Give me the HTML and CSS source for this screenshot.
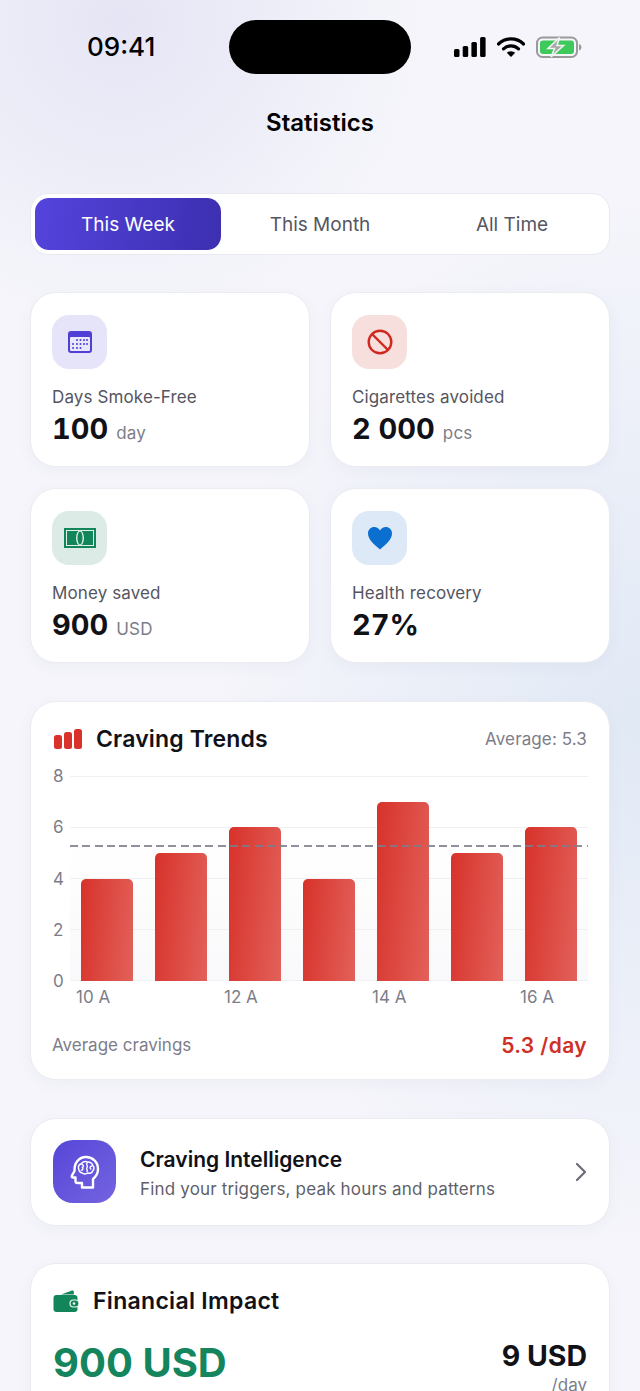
FILE: index.html
```html
<!DOCTYPE html>
<html lang="en">
<head>
    <meta charset="UTF-8">
    <meta name="viewport" content="width=device-width, initial-scale=1.0">
    <title>Statistics</title>
    <link rel="stylesheet" href="styles.css">
</head>
<body>
    <div class="status-bar">
        <span class="time">09:41</span>
        <div class="island"></div>
        <div class="status-icons">
            <svg class="signal" width="32" height="20" viewBox="0 0 32 20">
                <rect x="0" y="12" width="5.500" height="8" rx="1.500"/>
                <rect x="8.700" y="9" width="5.500" height="11" rx="1.500"/>
                <rect x="17.400" y="5" width="5.500" height="15" rx="1.500"/>
                <rect x="26.100" y="0" width="5.500" height="20" rx="1.500"/>
            </svg>
            <svg class="wifi" width="28" height="20" viewBox="0 0 28 20">
                <path d="M1.500 7a18 18 0 0 1 25 0" fill="none" stroke="#000" stroke-width="3.200" stroke-linecap="round"/>
                <path d="M6.500 11.800a11 11 0 0 1 15 0" fill="none" stroke="#000" stroke-width="3.200" stroke-linecap="round"/>
                <path d="M9.800 15.800a6.200 6.200 0 0 1 8.400 0L14 20z"/>
            </svg>
            <svg class="battery" width="46" height="22" viewBox="0 0 46 22">
                <rect x="1" y="1.500" width="40" height="19.500" rx="5.500" fill="none" stroke="#9a9a9a" stroke-width="2"/>
                <rect x="4" y="4.500" width="34" height="13.500" rx="3" fill="#3ec95c"/>
                <path d="M43 8c1.600.400 2.400 1.600 2.400 3.200s-.800 2.800-2.400 3.200z" fill="#9a9a9a"/>
                <path d="M23.500 1.500 12 12.500h6.500L15 21l12.500-11.500H21z" fill="#a8a8a8" stroke="#eef4ef" stroke-width="1.600"/>
            </svg>
        </div>
    </div>

    <h1 class="page-title">Statistics</h1>

    <main class="content">
        <div class="tabs">
            <div class="tab tab-active">This Week</div>
            <div class="tab">This Month</div>
            <div class="tab">All Time</div>
        </div>

        <div class="stat-grid">
            <div class="card stat-card">
                <div class="stat-icon icon-purple">
                    <svg width="26" height="24" viewBox="0 0 26 24">
                        <rect x="1" y="1" width="24" height="22" rx="3" fill="#4f3fd6"/>
                        <rect x="3" y="7" width="20" height="14" rx="1" fill="#e9e7fb"/>
                        <g fill="#4f3fd6">
                            <circle cx="10" cy="10" r="1"/><circle cx="13.500" cy="10" r="1"/><circle cx="17" cy="10" r="1"/><circle cx="20" cy="10" r="1"/>
                            <circle cx="6" cy="14" r="1"/><circle cx="10" cy="14" r="1"/><circle cx="13.500" cy="14" r="1"/><circle cx="17" cy="14" r="1"/><circle cx="20" cy="14" r="1"/>
                            <circle cx="6" cy="18" r="1"/><circle cx="10" cy="18" r="1"/><circle cx="13.500" cy="18" r="1"/>
                        </g>
                    </svg>
                </div>
                <div class="stat-label">Days Smoke-Free</div>
                <div class="stat-value">100 <span class="stat-unit">day</span></div>
            </div>
            <div class="card stat-card">
                <div class="stat-icon icon-red">
                    <svg width="26" height="26" viewBox="0 0 26 26" fill="none" stroke="#d0281e" stroke-width="2.400">
                        <circle cx="13" cy="13" r="11.300"/>
                        <path d="M5 5l16 16"/>
                    </svg>
                </div>
                <div class="stat-label">Cigarettes avoided</div>
                <div class="stat-value">2 000 <span class="stat-unit">pcs</span></div>
            </div>
            <div class="card stat-card">
                <div class="stat-icon icon-green">
                    <svg width="32" height="20" viewBox="0 0 32 20">
                        <rect width="32" height="20" fill="#12855a"/>
                        <rect x="2.500" y="2.500" width="27" height="15" fill="none" stroke="#e3f0ea" stroke-width="1"/>
                        <ellipse cx="16" cy="10" rx="4" ry="7.500" fill="#dcebe4"/>
                        <ellipse cx="16" cy="10" rx="2.500" ry="6.500" fill="#12855a"/>
                    </svg>
                </div>
                <div class="stat-label">Money saved</div>
                <div class="stat-value">900 <span class="stat-unit">USD</span></div>
            </div>
            <div class="card stat-card">
                <div class="stat-icon icon-blue">
                    <svg width="26" height="24" viewBox="0 0 26 24">
                        <path d="M13 23.500C8 19 1 14 1 7.500 1 3.500 4 1 7.200 1 9.700 1 11.900 2.300 13 4.500 14.100 2.300 16.300 1 18.800 1 22 1 25 3.500 25 7.500 25 14 18 19 13 23.500z" fill="#0b6fd0"/>
                    </svg>
                </div>
                <div class="stat-label">Health recovery</div>
                <div class="stat-value">27%</div>
            </div>
        </div>

        <section class="card chart-card">
            <div class="chart-header">
                <div class="chart-title">
                    <svg width="28" height="20" viewBox="0 0 28 20" fill="#d9322a">
                        <rect x="0" y="6" width="8" height="14" rx="2.500"/>
                        <rect x="10" y="3" width="8" height="17" rx="2.500"/>
                        <rect x="20" y="0" width="8" height="20" rx="2.500"/>
                    </svg>
                    <span>Craving Trends</span>
                </div>
                <span class="chart-average">Average: 5.3</span>
            </div>

            <div class="chart-body">
                <div class="y-axis">
                    <span>8</span><span>6</span><span>4</span><span>2</span><span>0</span>
                </div>
                <div class="plot">
                    <div class="grid-lines">
                        <i></i><i></i><i></i><i></i><i></i>
                    </div>
                    <div class="bars">
                        <div class="bar" style="height: 102px"></div>
                        <div class="bar" style="height: 128px"></div>
                        <div class="bar" style="height: 154px"></div>
                        <div class="bar" style="height: 102px"></div>
                        <div class="bar" style="height: 179px"></div>
                        <div class="bar" style="height: 128px"></div>
                        <div class="bar" style="height: 154px"></div>
                    </div>
                    <div class="avg-line"></div>
                </div>
            </div>
            <div class="x-axis">
                <span>10 A</span><span>12 A</span><span>14 A</span><span>16 A</span>
            </div>

            <div class="chart-footer">
                <span class="footer-label">Average cravings</span>
                <span class="footer-value">5.3 /day</span>
            </div>
        </section>

        <section class="card intel-card">
            <div class="intel-icon">
                <svg width="30" height="34" viewBox="0 0 30 34" fill="none" stroke="#fff" stroke-width="2.400" stroke-linecap="round" stroke-linejoin="round">
                    <path d="M12 32.500V28H7.500c-1.200 0-2-.800-2-2v-3.500H3c-1 0-1.600-1-1.100-1.800L4.500 16C4 8 9 2 16 2c6.500 0 12 5 12 12 0 4.500-2 7.500-5 10v8.500z"/>
                    <path d="M8.500 13c-.500-2 1-4 3-4.300 1-1.900 4-2.700 6-1.500 2.500-.500 5 1 5.300 3.300 1.500 1.200 1.500 4 0 5.300-.500 2-3 3-5 2.200-1.500 1.300-4.500 1.300-5.800-.200-1.700 0-3.200-1.400-3.500-4.800z" stroke-width="1.500"/>
                    <path d="M12 9.500c1.800.300 2 2.300.300 3 1 .800.800 2.500-1 2.700M17 8c-1.500 1.500 1.500 2.500 0 4.500s1.500 2.500 0 4M22 11c-2 0-2.500 1.800-1.200 3" stroke-width="1.400"/>
                </svg>
            </div>
            <div class="intel-text">
                <div class="intel-title">Craving Intelligence</div>
                <div class="intel-sub">Find your triggers, peak hours and patterns</div>
            </div>
            <svg class="chevron" width="12" height="20" viewBox="0 0 12 20" fill="none" stroke="#6c6c78" stroke-width="2.200" stroke-linecap="round" stroke-linejoin="round">
                <path d="M2 2l8 8-8 8"/>
            </svg>
        </section>

        <section class="card finance-card">
            <div class="finance-title">
                <svg width="26" height="22" viewBox="0 0 26 22">
                    <path d="M8 4.500 19 .600c1-.300 1.800.200 1.800 1.400v2.500z" fill="#12855a"/>
                    <rect x="0.500" y="5" width="24" height="17" rx="3" fill="#12855a"/>
                    <rect x="17" y="10" width="9" height="7" rx="3.500" fill="#12855a" stroke="#f2f8f5" stroke-width="1.200"/>
                    <circle cx="21" cy="13.500" r="1.300" fill="#f2f8f5"/>
                </svg>
                <span>Financial Impact</span>
            </div>
            <div class="finance-row">
                <div class="finance-total">900 USD</div>
                <div class="finance-rate">
                    <div class="rate-value">9 USD</div>
                    <div class="rate-unit">/day</div>
                </div>
            </div>
        </section>
    </main>
</body>
</html>
```

FILE: styles.css
```css
* {
    box-sizing: border-box;
}
body {
    margin: 0;
    width: 640px;
    height: 1391px;
    overflow: hidden;
    font-family: Inter, "Noto Sans", sans-serif;
    color: #111118;
    background:
        radial-gradient(circle at 120px 20px, #e5e5f5 0, rgba(229, 229, 245, 0) 300px),
        radial-gradient(ellipse 420px 520px at 640px 720px, #e1e9f5 0, rgba(225, 233, 245, 0) 100%),
        #f5f5fb;
}

/* status bar */
.status-bar {
    display: grid;
    grid-template-columns: 229px 182px 229px;
    padding-top: 20px;
    height: 74px;
}
.time {
    padding-left: 87px;
    font-size: 26px;
    font-weight: 500;
    line-height: 54px;
    color: #000;
}
.island {
    height: 54px;
    background: #000;
    border-radius: 27px;
}
.status-icons {
    display: flex;
    align-items: center;
    gap: 11px;
    padding-left: 43px;
}
.signal {
    fill: #000;
}
.page-title {
    margin: 34px 0 0;
    font-size: 24px;
    font-weight: 600;
    line-height: 30px;
    text-align: center;
    color: #000;
}

.content {
    padding: 0 30px;
}
.card {
    background: #fff;
    border: 1px solid #ebebf2;
    border-radius: 26px;
    box-shadow: 0 4px 14px rgba(90, 90, 140, 0.05);
}

/* tabs */
.tabs {
    display: grid;
    grid-template-columns: repeat(3, 1fr);
    gap: 6px;
    margin-top: 55px;
    padding: 4px;
    background: #fff;
    border: 1px solid #e9e9f1;
    border-radius: 18px;
}
.tab {
    height: 52px;
    font-size: 19px;
    line-height: 54px;
    text-align: center;
    color: #56565f;
}
.tab-active {
    color: #fff;
    background: linear-gradient(100deg, #5444dc, #3c2fb0);
    border-radius: 14px;
}

/* stat cards */
.stat-grid {
    display: grid;
    grid-template-columns: 1fr 1fr;
    gap: 21px 20px;
    margin-top: 37px;
}
.stat-card {
    padding: 22px 22px 18px 21px;
}
.stat-icon {
    display: flex;
    align-items: center;
    justify-content: center;
    width: 55px;
    height: 54px;
    border-radius: 17px;
}
.icon-purple { background: #e6e4f8; }
.icon-red { background: #f6dfdd; }
.icon-green { background: #dcebe5; }
.icon-blue { background: #dde9f6; }
.stat-label {
    margin-top: 17px;
    font-size: 17px;
    line-height: 22px;
    letter-spacing: 0.12px;
    color: #55555f;
}
.stat-value {
    display: flex;
    align-items: baseline;
    gap: 8px;
    height: 38px;
    margin-top: 2px;
    font-size: 29px;
    font-weight: 700;
    font-variant-numeric: tabular-nums;
    line-height: 38px;
    white-space: nowrap;
}
.stat-unit {
    font-size: 17px;
    font-weight: 400;
    letter-spacing: 0.2px;
    color: #7d7d88;
}

/* chart */
.chart-card {
    margin-top: 38px;
    padding: 22px 22px 20px 21px;
}
.chart-header {
    display: flex;
    align-items: center;
    justify-content: space-between;
    height: 30px;
}
.chart-title {
    display: flex;
    align-items: center;
    gap: 14px;
    padding-left: 2px;
    font-size: 23px;
    font-weight: 600;
    letter-spacing: 0.15px;
}
.chart-average {
    font-size: 17px;
    letter-spacing: 0.12px;
    color: #7d7d8a;
}
.chart-body {
    display: flex;
    margin-top: 22px;
}
.y-axis {
    display: flex;
    flex-direction: column;
    justify-content: space-between;
    width: 18px;
    height: 225px;
    margin: -10px 0;
    padding-left: 1px;
    font-size: 17px;
    line-height: 20px;
    color: #7d7d8a;
}
.plot {
    position: relative;
    flex: 1;
    height: 205px;
    margin-right: -1px;
    background: linear-gradient(to bottom, #fff 30%, #f9f9fb);
}
.grid-lines {
    position: absolute;
    inset: 0;
    display: flex;
    flex-direction: column;
    justify-content: space-between;
}
.grid-lines i {
    display: block;
    height: 1px;
    background: #f0f0f4;
}
.bars {
    position: absolute;
    inset: 0;
    display: flex;
    align-items: flex-end;
    gap: 22px;
    padding-left: 11px;
}
.bar {
    flex: none;
    width: 52px;
    background: linear-gradient(95deg, #d7322a, #e2615a);
    border-radius: 5px 5px 0 0;
}
.avg-line {
    position: absolute;
    top: 69px;
    left: 0;
    right: 0;
    height: 1.500px;
    background: repeating-linear-gradient(to right, #7c7c8c 0, #7c7c8c 8px, transparent 8px, transparent 12.300px);
    opacity: 0.85;
}
.x-axis {
    display: flex;
    margin-top: 6px;
    padding-left: 24px;
    font-size: 17px;
    line-height: 20px;
    color: #7d7d8a;
}
.x-axis span {
    flex: none;
    width: 148px;
}
.x-axis span:last-child {
    width: auto;
}
.chart-footer {
    display: flex;
    align-items: center;
    justify-content: space-between;
    height: 28px;
    margin-top: 24px;
}
.footer-label {
    font-size: 17px;
    color: #7d7d8a;
}
.footer-value {
    font-size: 21px;
    font-weight: 600;
    letter-spacing: 0.4px;
    color: #cf2f26;
}

/* craving intelligence */
.intel-card {
    display: flex;
    align-items: center;
    gap: 24px;
    margin-top: 38px;
    padding: 21px 22px 22px;
}
.intel-icon {
    display: flex;
    align-items: center;
    justify-content: center;
    width: 63px;
    height: 63px;
    background: linear-gradient(135deg, #5646d8, #7464e0);
    border-radius: 20px;
}
.intel-text {
    flex: 1;
    padding-top: 3px;
}
.intel-title {
    font-size: 21px;
    font-weight: 600;
    line-height: 28px;
}
.intel-sub {
    margin-top: 3px;
    font-size: 17px;
    line-height: 24px;
    letter-spacing: 0.17px;
    color: #5f5f6a;
}

/* financial impact */
.finance-card {
    margin-top: 37px;
    padding: 22px;
    height: 200px;
}
.finance-title {
    display: flex;
    align-items: center;
    gap: 14px;
    font-size: 23px;
    font-weight: 600;
    line-height: 30px;
    letter-spacing: 0.3px;
}
.finance-row {
    display: flex;
    justify-content: space-between;
    margin-top: 23px;
}
.finance-total {
    font-size: 40px;
    font-weight: 700;
    line-height: 48px;
    color: #14855c;
}
.finance-rate {
    text-align: right;
}
.rate-value {
    font-size: 28.500px;
    font-weight: 700;
    line-height: 34px;
}
.rate-unit {
    margin-top: 1px;
    font-size: 17px;
    line-height: 22px;
    color: #7d7d8a;
}
```
